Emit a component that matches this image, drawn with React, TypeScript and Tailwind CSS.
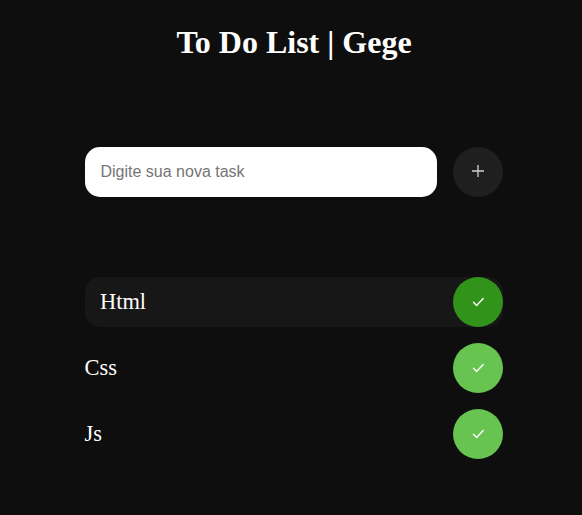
const tasks = [
  { name: "Html", active: true },
  { name: "Css", active: false },
  { name: "Js", active: false },
];

function Check() {
  return (
    <svg width="16" height="16" viewBox="0 0 16 16" fill="none" stroke="white" strokeWidth="1.4" strokeLinecap="round" strokeLinejoin="round">
      <path d="M3.5 8.3 6.6 11.4 13.2 4.4" />
    </svg>
  );
}

function Plus() {
  return (
    <svg className="mb-0.5" width="16" height="16" viewBox="0 0 16 16" fill="none" stroke="#d0d0d0" strokeWidth="1.3">
      <path d="M8 2v12M2 8h12" />
    </svg>
  );
}

export default function App() {
  return (
    <main className="flex h-[515px] w-full flex-col bg-[#0e0e0e] pt-[24px] font-['Liberation_Serif',serif] text-white">
      <h1 className="pl-[6px] text-center text-[32px] leading-[37px] font-bold">To Do List | Gege</h1>
      <form className="mt-[86px] ml-[85px] flex w-[418px] gap-4">
        <input
          className="h-[50px] w-[352px] rounded-[15px] bg-white px-[15.5px] font-['Liberation_Sans',sans-serif] text-[16px] text-black placeholder:text-[#757575]"
          placeholder="Digite sua nova task"
        />
        <button type="button" className="flex size-[50px] items-center justify-center rounded-full bg-[#1f1f1f]">
          <Plus />
        </button>
      </form>
      <ul className="mt-20 ml-[84.5px] flex w-[418.5px] flex-col gap-4">
        {tasks.map((task) => (
          <li
            key={task.name}
            className={`flex h-[50px] items-center justify-between rounded-[15px] text-[22.4px] leading-[26px] ${task.active ? "bg-[#171717] pl-[15.5px]" : ""}`}
          >
            <span>{task.name}</span>
            <button
              className={`flex size-[50px] items-center justify-center rounded-full ${task.active ? "bg-[#319319]" : "bg-[#67c451]"}`}
            >
              <Check />
            </button>
          </li>
        ))}
      </ul>
    </main>
  );
}
